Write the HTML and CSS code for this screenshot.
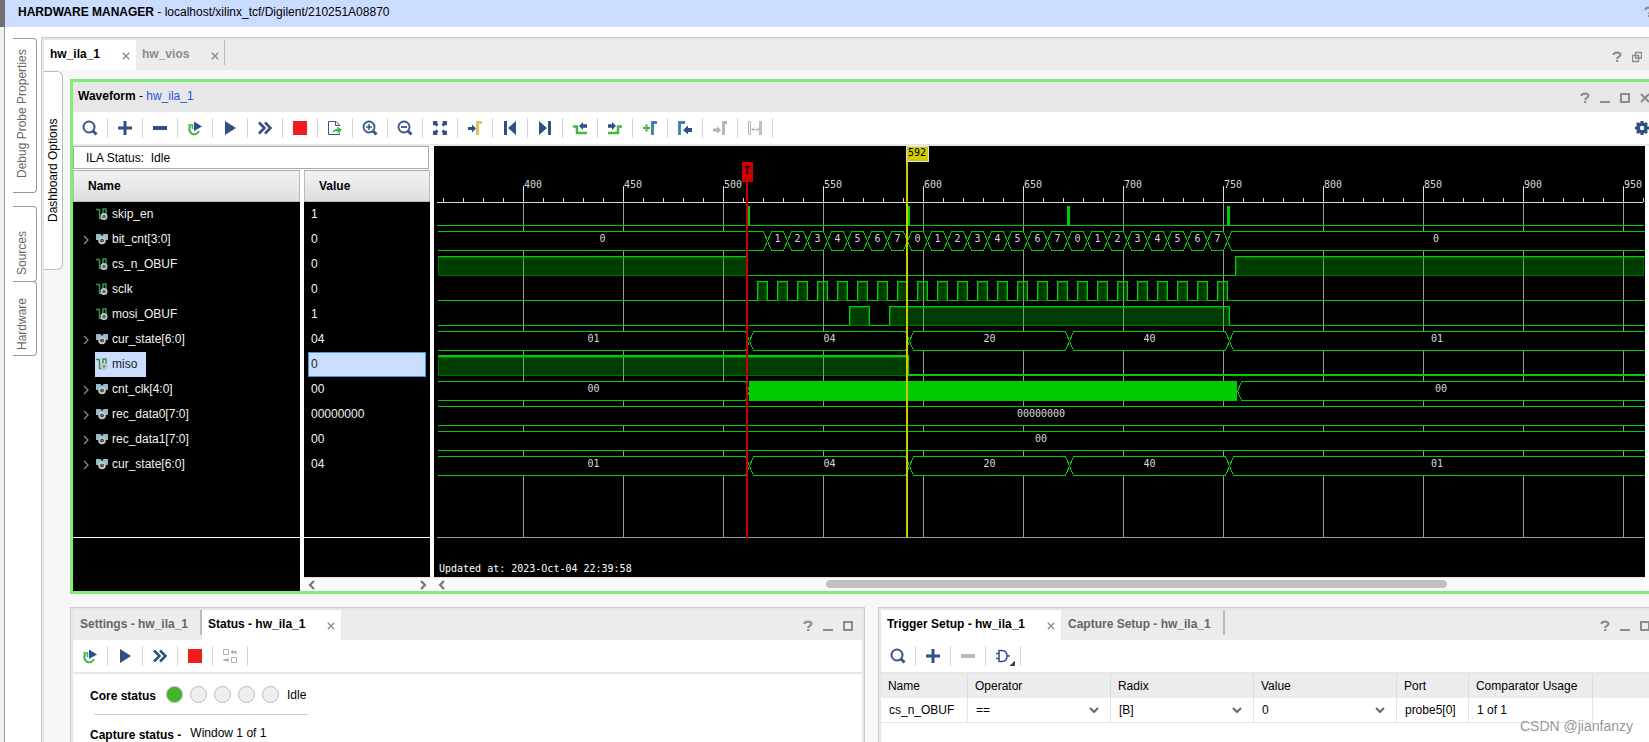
FILE: index.html
```html
<!DOCTYPE html>
<html lang="en">
<head>
<meta charset="utf-8">
<title>Hardware Manager</title>
<link rel="stylesheet" href="styles.css">
</head>
<body>
<svg class="sprite" aria-hidden="true">
  <symbol id="i-search" viewBox="0 0 16 16"><circle cx="7" cy="7" r="5.500" fill="none" stroke="#3a5588" stroke-width="2"/><path d="M11 11l3.500 3.500" stroke="#3a5588" stroke-width="3"/></symbol>
  <symbol id="i-plus" viewBox="0 0 16 16"><path d="M1 8h14M8 1v14" stroke="#2f4f86" stroke-width="3"/></symbol>
  <symbol id="i-minus" viewBox="0 0 16 16"><path d="M1 8h14" stroke="currentColor" stroke-width="4"/></symbol>
  <symbol id="i-rerun" viewBox="0 0 16 16"><path d="M3.500 6A5 5 0 1 0 12 11" fill="none" stroke="#3fb548" stroke-width="2"/><path d="M1 5h4.500v4" fill="none" stroke="#3fb548" stroke-width="1.500"/><path d="M7 1.500L15 6.500 7 11z" fill="#2f4f86"/></symbol>
  <symbol id="i-play" viewBox="0 0 16 16"><path d="M3 1l11 7-11 7z" fill="#2f4f86"/></symbol>
  <symbol id="i-ff" viewBox="0 0 16 16"><path d="M2 2.500L7.500 8 2 13.500M8 2.500L13.500 8 8 13.500" fill="none" stroke="#2f4f86" stroke-width="2.500"/></symbol>
  <symbol id="i-stop" viewBox="0 0 16 16"><path d="M1 1h14v14H1z" fill="#ee1c1c"/></symbol>
  <symbol id="i-export" viewBox="0 0 16 16"><path d="M12.500 6V5l-3.500-3.500H1.500v13h11V13M8.500 1.500v4h4" fill="none" stroke="#3a5588"/><path d="M5.500 13c.5-3 2-4 5-4V6.500L15 10l-4.500 3.500V11c-2 0-3.500.5-5 2z" fill="#3fb548"/></symbol>
  <symbol id="i-zoomin" viewBox="0 0 16 16"><circle cx="7" cy="7" r="5.500" fill="none" stroke="#3a5588" stroke-width="1.800"/><path d="M11 11l3.500 3.500" stroke="#3a5588" stroke-width="3"/><path d="M4 7h6M7 4v6" stroke="#3a5588" stroke-width="1.500"/></symbol>
  <symbol id="i-zoomout" viewBox="0 0 16 16"><circle cx="7" cy="7" r="5.500" fill="none" stroke="#3a5588" stroke-width="1.800"/><path d="M11 11l3.500 3.500" stroke="#3a5588" stroke-width="3"/><path d="M4 7h6" stroke="#3a5588" stroke-width="1.800"/></symbol>
  <symbol id="i-fit" viewBox="0 0 16 16"><path d="M1 1h5L4.800 2.200 6.500 4.500 4.500 6.500 2.200 4.800 1 6zM15 1v5l-1.200-1.200L11.500 6.500 9.500 4.500l1.700-2.300L10 1zM1 15v-5l1.200 1.200L4.500 9.500l2 2-1.700 2.300L6 15zM15 15h-5l1.200-1.200L9.500 11.500l2-2 2.300 1.700L15 10z" fill="#2f4f86"/></symbol>
  <symbol id="i-gotocursor" viewBox="0 0 16 16"><path d="M1 7h4V4.500L9 8.500l-4 4V10H1z" fill="#2f4f86"/><path d="M10.500 15V2.500H15" fill="none" stroke="#e0c565" stroke-width="3"/></symbol>
  <symbol id="i-first" viewBox="0 0 16 16"><path d="M2 1h3v14H2zM14 1v14L6 8z" fill="#2f4f86"/></symbol>
  <symbol id="i-last" viewBox="0 0 16 16"><path d="M11 1h3v14h-3zM2 1v14l8-7z" fill="#2f4f86"/></symbol>
  <symbol id="i-prevedge" viewBox="0 0 16 16"><path d="M1 6.500h4v6.500h10" fill="none" stroke="#45b83d" stroke-width="2.500"/><path d="M15 4.200v3.600h-4V10L7 6l4-4v2.200z" fill="#2f4f86"/></symbol>
  <symbol id="i-nextedge" viewBox="0 0 16 16"><path d="M15 6.500h-4v6.500H1" fill="none" stroke="#45b83d" stroke-width="2.500"/><path d="M1 4.200v3.600h4V10l4-4-4-4v2.200z" fill="#2f4f86"/></symbol>
  <symbol id="i-addmarker" viewBox="0 0 16 16"><path d="M1 8h7M4.500 4.500v7" stroke="#45b83d" stroke-width="2.200"/><path d="M10.500 15V2.500H15" fill="none" stroke="#3b80b0" stroke-width="2.800"/></symbol>
  <symbol id="i-prevmarker" viewBox="0 0 16 16"><path d="M2.500 15V2.500H8" fill="none" stroke="#3b80b0" stroke-width="2.800"/><path d="M15 8v4h-4v2.500L6 10l5-4.500V8z" fill="#2f4f86"/></symbol>
  <symbol id="i-nextmarker" viewBox="0 0 16 16"><path d="M1 8.500h4V6l4 4-4 4v-2.500H1z" fill="#b4b4b4"/><path d="M11.500 15V2.500H15" fill="none" stroke="#b4b4b4" stroke-width="2.800"/></symbol>
  <symbol id="i-swap" viewBox="0 0 16 16"><path d="M1.500 1.500h2v13h-2zM5 9.500h7M7 7.500l-2 2 2 2M10 7.500l2 2-2 2" fill="none" stroke="#b4b4b4"/><path d="M12 1h3v14h-3z" fill="#c0c0c0"/></symbol>
  <symbol id="i-gear" viewBox="0 0 16 16"><circle cx="8" cy="8" r="4" fill="none" stroke="#2f4f86" stroke-width="3.600"/><path d="M8 1v2M8 13v2M1 8h2M13 8h2M3 3l1.500 1.500M11.500 11.500L13 13M13 3l-1.500 1.500M4.500 11.500L3 13" stroke="#2f4f86" stroke-width="3"/></symbol>
  <symbol id="i-dash" viewBox="0 0 16 16"><path d="M1.500 1.500h5v5h-5zM9.500 9.500h5v5h-5z" fill="none" stroke="#b0b0b0"/><path d="M8.500 4L11 1.500V3h3.500v3h-1.500V5h-2v1.500zM7.500 12L5 9.500V11H1.500v2H5v1.500z" fill="#b0b0b0"/></symbol>
  <symbol id="i-gate" viewBox="0 0 16 16"><path d="M4 2.500h3c3.500 0 5 2.500 5 5.500s-1.500 5.500-5 5.500H4zM1 5.500h3M1 10.500h3M12 8h3" fill="none" stroke="#2f4f86" stroke-width="1.500"/></symbol>
  <symbol id="i-close" viewBox="0 0 10 10"><path d="M1 1l8 8M9 1L1 9" stroke="currentColor" stroke-width="1.600"/></symbol>
  <symbol id="i-help" viewBox="0 0 10 12"><path d="M1.500 4C1.500 .8 8.500 .8 8.500 3.800 8.500 5.800 5.200 5.500 5.200 8M5.200 9v2" fill="none" stroke="#8c8c8c" stroke-width="2.200"/></symbol>
  <symbol id="i-min" viewBox="0 0 10 12"><path d="M0 9h10v2H0z" fill="#8c8c8c"/></symbol>
  <symbol id="i-max" viewBox="0 0 10 12"><path d="M1 2h8v8H1z" fill="none" stroke="#8c8c8c" stroke-width="2"/></symbol>
  <symbol id="i-x" viewBox="0 0 10 12"><path d="M1 2l8 8M9 2l-8 8" stroke="#8c8c8c" stroke-width="2"/></symbol>
  <symbol id="i-restore" viewBox="0 0 10 12"><path d="M3.500 1.500h6v5.500h-6zM.5 4.500h6v6h-6z" fill="none" stroke="#8c8c8c" stroke-width="1.300"/></symbol>
  <symbol id="i-left" viewBox="0 0 8 10"><path d="M6 1L2 5l4 4" fill="none" stroke="#777" stroke-width="2.200"/></symbol>
  <symbol id="i-right" viewBox="0 0 8 10"><path d="M2 1l4 4-4 4" fill="none" stroke="#777" stroke-width="2.200"/></symbol>
  <symbol id="i-down" viewBox="0 0 10 6"><path d="M1 1l4 4 4-4" fill="none" stroke="#666" stroke-width="2"/></symbol>
  <symbol id="i-expand" viewBox="0 0 6 10"><path d="M1 1l4 4-4 4" fill="none" stroke="#8a8a8a" stroke-width="1.300"/></symbol>
  <symbol id="i-wire" viewBox="0 0 12 12"><path d="M0 1.500h3.500v9H6M7 6V1h3v5" fill="none" stroke="#35964a" stroke-width="1.500"/><circle cx="8" cy="8.500" r="2.500" fill="none" stroke="#c4c4c4" stroke-width="2"/><circle cx="8" cy="8.500" r="1.200" fill="#777"/></symbol>
  <symbol id="i-bus" viewBox="0 0 12 12"><path d="M0 1h4.500L6 3l1.500-2H12v6H9.500L6 5 2.500 7H0z" fill="#93b9cf"/><circle cx="6" cy="7.500" r="2.800" fill="none" stroke="#c8c8c8" stroke-width="2"/><circle cx="6" cy="7.500" r="1.300" fill="#777"/></symbol>
</svg>

<header class="titlebar">
  <h1><strong>HARDWARE MANAGER</strong> - localhost/xilinx_tcf/Digilent/210251A08870</h1>
  <button class="wbtn" aria-label="Help"><svg><use href="#i-help"/></svg></button>
</header>

<main class="app">
  <nav class="rail" aria-label="Side panels">
    <button class="vtab vtab-probe">Debug Probe Properties</button>
    <button class="vtab vtab-sources">Sources</button>
    <button class="vtab vtab-hardware">Hardware</button>
  </nav>

  <section class="workspace">
    <div class="tabstrip">
      <div class="tab active"><button class="tablabel">hw_ila_1</button><button class="tabclose" aria-label="Close hw_ila_1"><svg><use href="#i-close"/></svg></button></div>
      <div class="tab muted"><button class="tablabel">hw_vios</button><button class="tabclose" aria-label="Close hw_vios"><svg><use href="#i-close"/></svg></button></div>
      <div class="wbtns">
        <button class="wbtn" aria-label="Help"><svg><use href="#i-help"/></svg></button>
        <button class="wbtn" aria-label="Restore"><svg><use href="#i-restore"/></svg></button>
      </div>
    </div>

    <div class="dashboard">
      <button class="optionstab">Dashboard Options</button>
      <div class="panes">
        <section class="waveform">
          <header class="panehead">
            <h2><strong>Waveform</strong> - <a href="#hw_ila_1">hw_ila_1</a></h2>
            <div class="wbtns">
              <button class="wbtn" aria-label="Help"><svg><use href="#i-help"/></svg></button>
              <button class="wbtn" aria-label="Minimize"><svg><use href="#i-min"/></svg></button>
              <button class="wbtn" aria-label="Maximize"><svg><use href="#i-max"/></svg></button>
              <button class="wbtn" aria-label="Close"><svg><use href="#i-x"/></svg></button>
            </div>
          </header>
          <div class="toolbar">
            <button aria-label="Search"><svg><use href="#i-search"/></svg></button>
            <button aria-label="Add probes"><svg><use href="#i-plus"/></svg></button>
            <button aria-label="Remove probes"><svg><use href="#i-minus"/></svg></button>
            <button aria-label="Auto re-trigger"><svg><use href="#i-rerun"/></svg></button>
            <button aria-label="Run trigger"><svg><use href="#i-play"/></svg></button>
            <button aria-label="Run trigger immediate"><svg><use href="#i-ff"/></svg></button>
            <button aria-label="Stop trigger"><svg><use href="#i-stop"/></svg></button>
            <button aria-label="Export data"><svg><use href="#i-export"/></svg></button>
            <button aria-label="Zoom in"><svg><use href="#i-zoomin"/></svg></button>
            <button aria-label="Zoom out"><svg><use href="#i-zoomout"/></svg></button>
            <button aria-label="Zoom fit"><svg><use href="#i-fit"/></svg></button>
            <button aria-label="Go to cursor"><svg><use href="#i-gotocursor"/></svg></button>
            <button aria-label="Go to start"><svg><use href="#i-first"/></svg></button>
            <button aria-label="Go to end"><svg><use href="#i-last"/></svg></button>
            <button aria-label="Previous transition"><svg><use href="#i-prevedge"/></svg></button>
            <button aria-label="Next transition"><svg><use href="#i-nextedge"/></svg></button>
            <button aria-label="Add marker"><svg><use href="#i-addmarker"/></svg></button>
            <button aria-label="Previous marker"><svg><use href="#i-prevmarker"/></svg></button>
            <button aria-label="Next marker"><svg><use href="#i-nextmarker"/></svg></button>
            <button aria-label="Swap cursors"><svg><use href="#i-swap"/></svg></button>
            <button class="settings" aria-label="Settings"><svg><use href="#i-gear"/></svg></button>
          </div>
          <div class="viewer">
            <div class="signals">
              <p class="ilastatus">ILA Status:&nbsp; Idle</p>
              <table class="sigtable">
                <thead><tr><th class="cname">Name</th><td class="cgap"></td><th class="cvalue">Value</th></tr></thead>
                <tbody id="signals"></tbody>
              </table>
              <div class="sigrest">
                <div class="restname"><div class="restline"></div></div>
                <div class="restvalue">
                  <div class="restline"></div>
                  <div class="hscroll"><button aria-label="Scroll left"><svg><use href="#i-left"/></svg></button><button aria-label="Scroll right"><svg><use href="#i-right"/></svg></button></div>
                </div>
              </div>
            </div>
            <div class="wavearea">
              <svg id="wave" class="wave" role="img" aria-label="Captured waveform"></svg>
              <div class="hscroll wide">
                <button aria-label="Scroll left"><svg><use href="#i-left"/></svg></button>
                <div class="track"><div class="thumb"></div></div>
              </div>
            </div>
          </div>
        </section>

        <div class="lower">
          <section class="pane statuspane">
            <div class="tabstrip">
              <div class="tab dim"><button class="tablabel">Settings - hw_ila_1</button></div>
              <div class="tab active"><button class="tablabel">Status - hw_ila_1</button><button class="tabclose" aria-label="Close Status"><svg><use href="#i-close"/></svg></button></div>
              <div class="wbtns">
                <button class="wbtn" aria-label="Help"><svg><use href="#i-help"/></svg></button>
                <button class="wbtn" aria-label="Minimize"><svg><use href="#i-min"/></svg></button>
                <button class="wbtn" aria-label="Maximize"><svg><use href="#i-max"/></svg></button>
              </div>
            </div>
            <div class="toolbar">
              <button aria-label="Auto re-trigger"><svg><use href="#i-rerun"/></svg></button>
              <button aria-label="Run trigger"><svg><use href="#i-play"/></svg></button>
              <button aria-label="Run trigger immediate"><svg><use href="#i-ff"/></svg></button>
              <button aria-label="Stop trigger"><svg><use href="#i-stop"/></svg></button>
              <button aria-label="Dashboard link"><svg><use href="#i-dash"/></svg></button>
            </div>
            <div class="statusbody">
              <div class="corestatus">
                <strong>Core status</strong>
                <span class="leds"><i class="led on"></i><i class="led"></i><i class="led"></i><i class="led"></i><i class="led"></i></span>
                <span>Idle</span>
              </div>
              <div class="capstatus"><strong>Capture status - </strong><span>Window 1 of 1</span></div>
            </div>
          </section>

          <section class="pane triggerpane">
            <div class="tabstrip">
              <div class="tab active"><button class="tablabel">Trigger Setup - hw_ila_1</button><button class="tabclose" aria-label="Close Trigger Setup"><svg><use href="#i-close"/></svg></button></div>
              <div class="tab dim"><button class="tablabel">Capture Setup - hw_ila_1</button></div>
              <div class="wbtns">
                <button class="wbtn" aria-label="Help"><svg><use href="#i-help"/></svg></button>
                <button class="wbtn" aria-label="Minimize"><svg><use href="#i-min"/></svg></button>
                <button class="wbtn" aria-label="Maximize"><svg><use href="#i-max"/></svg></button>
              </div>
            </div>
            <div class="toolbar">
              <button aria-label="Search"><svg><use href="#i-search"/></svg></button>
              <button aria-label="Add probe"><svg><use href="#i-plus"/></svg></button>
              <button class="off" aria-label="Remove probe"><svg><use href="#i-minus"/></svg></button>
              <button class="hasmenu" aria-label="Trigger condition"><svg><use href="#i-gate"/></svg></button>
            </div>
            <div class="probearea">
              <table class="probes">
                <colgroup><col class="w-name"><col class="w-pick"><col class="w-pick"><col class="w-pick"><col class="w-port"><col class="w-usage"><col></colgroup>
                <thead><tr><th>Name</th><th id="h-op">Operator</th><th id="h-radix">Radix</th><th id="h-val">Value</th><th>Port</th><th>Comparator Usage</th><th></th></tr></thead>
                <tbody><tr>
                  <td>cs_n_OBUF</td>
                  <td><span class="pick"><select aria-labelledby="h-op"><option>==</option></select><svg><use href="#i-down"/></svg></span></td>
                  <td><span class="pick"><select aria-labelledby="h-radix"><option>[B]</option></select><svg><use href="#i-down"/></svg></span></td>
                  <td><span class="pick"><select aria-labelledby="h-val"><option>0</option></select><svg><use href="#i-down"/></svg></span></td>
                  <td>probe5[0]</td>
                  <td>1 of 1</td>
                  <td></td>
                </tr></tbody>
              </table>
            </div>
          </section>
        </div>
      </div>
    </div>
  </section>
</main>
<div class="watermark">CSDN @jianfanzy</div>
<script src="wave.js"></script>
</body>
</html>
```

FILE: styles.css
```css
* { box-sizing: border-box; }

body {
  margin: 0;
  height: 100vh;
  display: flex;
  flex-direction: column;
  overflow: hidden;
  position: relative;
  background: #fff;
  color: #000;
  font: 12px/16px "Liberation Sans", Arial, sans-serif;
}

h1, h2, p { margin: 0; font-size: 12px; font-weight: normal; }
button { font: inherit; color: inherit; background: none; border: 0; padding: 0; margin: 0; }
.sprite { display: none; }

.titlebar {
  flex: none;
  display: flex;
  justify-content: space-between;
  align-items: center;
  height: 27px;
  padding: 0 0 3px 13px;
  margin-right: -10px;
  border-left: 5px solid #707070;
  background: #cbddff;
}

.app { flex: 1; display: flex; min-height: 0; }

.rail {
  flex: none;
  width: 41px;
  padding: 11px 4px 0 9px;
  border-left: 4px solid #f0f0f0;
  box-shadow: inset 1px 0 #999;
  display: flex;
  flex-direction: column;
}
.vtab {
  writing-mode: vertical-rl;
  transform: rotate(180deg);
  border: 1px solid #999;
  border-right: 0;
  border-radius: 4px 0 0 4px;
  width: 24px;
  padding-left: 5px;
  color: #666;
}
.vtab-probe { height: 155px; margin-bottom: 13px; padding-top: 8px; padding-bottom: 4px; }
.vtab-sources { height: 76px; padding-bottom: 18px; }
.vtab-hardware { height: 75px; margin-top: -1px; padding-bottom: 10px; }

.workspace {
  flex: 1;
  min-width: 0;
  display: flex;
  flex-direction: column;
  overflow: hidden;
  margin-top: 10px;
  border-left: 1px solid #ccc;
  border-top: 1px solid #ccc;
  box-shadow: inset 2px 2px #e6e6e6;
  padding: 2px 0 0 2px;
  background: #f7f7f7;
}

.tabstrip { flex: none; display: flex; height: 30px; background: #ececec; font-weight: bold; }
.tab { display: flex; align-items: center; padding: 0 6px; }
.tablabel { padding-bottom: 3px; }
.tabclose { margin: 2px 0 0 22px; width: 8px; height: 8px; color: #888; }
.tabclose svg { display: block; width: 8px; height: 8px; }
.tab.active { background: #fff; }
.tab.muted, .tab.dim {
  background: linear-gradient(#bbb, #bbb) right top / 2px 25px no-repeat;
}
.tab.muted { color: #8c8c8c; background-size: 1px 25px; }
.tab.dim { color: #666; padding: 0 14px 0 7px; }

.wbtns { margin-left: auto; display: flex; align-items: center; padding-right: 4px; }
.wbtn { flex: none; width: 20px; height: 20px; display: grid; place-items: center; }
.wbtn svg { width: 10px; height: 12px; }
.workspace > .tabstrip .wbtns { padding-right: 2px; padding-top: 4px; }

.dashboard { flex: 1; min-height: 0; display: flex; align-items: flex-start; gap: 7px; margin-right: -13px; }
.optionstab {
  flex: none;
  writing-mode: vertical-rl;
  transform: rotate(180deg);
  width: 19px;
  height: 199px;
  margin-top: 1px;
  background: #fff;
  border: 1px solid #bbb;
  border-right: 0;
  border-radius: 6px 0 0 6px;
}
.panes { flex: 1; min-width: 0; align-self: stretch; padding-top: 9px; display: flex; flex-direction: column; gap: 13px; }

.waveform { flex: none; border: 3px solid #80ed78; background: #fff; }
.panehead { display: flex; align-items: center; height: 30px; padding-left: 5px; background: #e7e7e7; }
.panehead h2 { padding-bottom: 2px; }
.panehead a { color: #1a56e8; text-decoration: none; }
.panehead .wbtns, .pane .wbtns { padding-top: 2px; }

.toolbar { flex: none; display: flex; align-items: center; height: 34px; border-bottom: 2px solid #e7e7e7; background: #fff; }
.toolbar button { width: 35px; height: 20px; border-right: 1px solid #d5d5d5; display: grid; place-items: center; color: #2f4f86; }
.toolbar svg { width: 16px; height: 16px; }
.toolbar .settings { margin-left: auto; border: 0; }
.toolbar .off { color: #b8b8b8; }
.toolbar .hasmenu { background: linear-gradient(135deg, transparent 50%, #444 50%) 24px 15px / 5px 5px no-repeat; }

.viewer { display: flex; }
.signals { flex: none; width: 361px; display: flex; flex-direction: column; }
.ilastatus { width: 356px; height: 23px; padding: 3px 12px; border: 1px solid #aaa; margin-bottom: 1px; }
.sigtable { width: 357px; table-layout: fixed; border-collapse: separate; border-spacing: 0; }
.sigtable th {
  height: 32px;
  padding: 0 14px;
  text-align: left;
  background: linear-gradient(#f3f3f5, #dedee0);
  border: 1px solid #bbb;
  border-top-color: #aaa;
}
.cname { width: 227px; }
.cgap { width: 4px; padding: 0; background: #fff; }
.sigtable tbody td { height: 25px; padding: 0; background: #000; color: #f2f2f2; }
.sigtable tbody td.cgap { background: #fff; }
.signame { display: flex; align-items: center; height: 25px; padding-left: 10px; }
.expander { width: 6px; height: 10px; margin-right: 6px; }
.expander svg { display: block; width: 6px; height: 10px; }
.siglabel { display: flex; align-items: center; gap: 4px; height: 25px; padding: 0 9px 1px 1px; }
.siglabel svg { width: 12px; height: 12px; }
.sigvalue { margin: 0 4px; height: 25px; line-height: 22px; border: 1px solid transparent; padding-left: 2px; }
.picked .siglabel { background: #cbddff; color: #222; }
.picked .sigvalue { background: #cbddff; border-color: #3f97d6; color: #222; }
.sigrest { flex: 1; display: grid; grid-template-columns: 227px 126px; column-gap: 4px; }
.restname, .restvalue { background: #000; display: flex; flex-direction: column; }
.restline { height: 61px; border-bottom: 1px solid #fff; }
.hscroll { height: 14px; display: flex; align-items: center; justify-content: space-between; padding: 0 3px 0 4px; background: #fbfbfb; border-top: 1px solid #e2e2e2; }
.hscroll button, .hscroll button svg { display: block; width: 8px; height: 10px; }
.restvalue .hscroll { margin-top: auto; }
.wavearea { flex: 1; min-width: 0; margin-right: 14px; display: flex; flex-direction: column; }
.wave { display: block; width: 100%; height: 431px; background: #000; font: 10px "DejaVu Sans Mono", monospace; }
.hscroll.wide { padding-right: 6px; }
.track { flex: 1; padding: 0 16% 1px 0; display: flex; justify-content: flex-end; }
.thumb { height: 8px; width: 62%; border-radius: 4px; background: #c1c1c1; }

.grid { fill: #999; }
.axis { fill: #ddd; }
.lab { fill: #d8d8d8; }
.stamp { fill: #fff; }
.mid { text-anchor: middle; }
.area { fill: #00cc00; fill-opacity: .3; }
.inner { fill: none; stroke: #00cc00; stroke-opacity: .35; }
.trace { fill: none; stroke: #00cc00; }
.thick { stroke-width: 2; }
.solid { fill: #00cc00; }
.trigger { fill: #cc0000; }
.cursor { fill: #cccc00; }
.flag { fill: #cccc00; stroke: #ddd; }
.dark { fill: #000; }
.heavy { font-weight: bold; }

.lower { flex: 1; min-height: 0; display: flex; gap: 13px; }
.pane { min-width: 0; border: 1px solid #ccc; border-bottom: 0; box-shadow: inset 2px 2px #e6e6e6, inset -2px 0 #e6e6e6; padding: 2px 2px 0; display: flex; flex-direction: column; }
.pane .tab.active { padding-left: 6px; }
.statuspane { flex: 795 1 0; }
.triggerpane { flex: 784 1 0; }
.statusbody { flex: 1; background: #fff; padding: 9px 17px; }
.corestatus { display: flex; align-items: center; gap: 8px; height: 31px; padding-bottom: 8px; }
.corestatus strong { padding: 3px 2px 0 0; }
.leds { display: flex; gap: 7px; }
.led { width: 17px; height: 17px; border-radius: 50%; border: 1px solid #bbb; background: #eee; }
.led.on { background: #42b52a; }
.capstatus { display: flex; gap: 9px; width: 214px; margin-left: 4px; border-top: 1px solid #ccc; padding-top: 10px; white-space: nowrap; }
.capstatus strong { margin: 2px 0 0 -4px; }

.probearea { flex: 1; background: #fff; }
.probes { width: 100%; table-layout: fixed; border-collapse: separate; border-spacing: 0; }
.probes th { height: 24px; padding: 0 7px; text-align: left; font-weight: normal; background: #ececec; border-right: 1px solid #dcdcdc; }
.probes td { height: 25px; padding: 0 8px; border-right: 1px solid #e4e4e4; border-bottom: 1px solid #e4e4e4; }
.w-name { width: 87px; }
.w-pick { width: 143px; }
.w-port { width: 72px; }
.w-usage { width: 124px; }
.probes td:last-child { border: 0; }
.pick { display: grid; align-items: center; }
.pick > * { grid-area: 1 / 1; }
.pick select { appearance: none; border: 0; background: none; font: inherit; color: inherit; padding: 0; margin: 0; width: 100%; }
.pick svg { width: 10px; height: 6px; justify-self: end; margin-right: 3px; pointer-events: none; }

.watermark { position: absolute; right: 16px; bottom: 6px; font-size: 14px; line-height: 20px; color: #999; }
```

FILE: wave.js
```js
const SIGNALS = [
  { name: "skip_en", value: "1", kind: "pulse", at: [512, 592, 672, 752] },
  { name: "bit_cnt[3:0]", value: "0", kind: "bus", edges: [], labels: [] },
  { name: "cs_n_OBUF", value: "0", kind: "bit", start: 1, edges: [512, 756] },
  { name: "sclk", value: "0", kind: "bit", start: 0, edges: [] },
  { name: "mosi_OBUF", value: "1", kind: "bit", start: 0, edges: [563, 573, 583, 753] },
  { name: "cur_state[6:0]", value: "04", kind: "bus", edges: [513, 593, 673, 753], labels: ["01", "04", "20", "40", "01"] },
  { name: "miso", value: "0", kind: "bit", start: 1, edges: [592], picked: true },
  { name: "cnt_clk[4:0]", value: "00", kind: "bus", edges: [513, 757], labels: ["00", "", "00"], busy: 1 },
  { name: "rec_data0[7:0]", value: "00000000", kind: "bus", edges: [], labels: ["00000000"] },
  { name: "rec_data1[7:0]", value: "00", kind: "bus", edges: [], labels: ["00"] },
  { name: "cur_state[6:0]", value: "04", kind: "bus", edges: [513, 593, 673, 753], labels: ["01", "04", "20", "40", "01"] }
];
for (let k = 0; k < 24; k++) {
  SIGNALS[1].edges.push(522 + k * 10);
  SIGNALS[1].labels.push(String(k % 8));
  SIGNALS[3].edges.push(517 + k * 10, 522 + k * 10);
}
SIGNALS[1].labels.push("0");

document.getElementById("signals").innerHTML = SIGNALS.map(s => {
  const bus = s.kind === "bus";
  const arrow = bus ? '<svg><use href="#i-expand"/></svg>' : "";
  const tag = bus ? "button" : "span";
  return `<tr class="${s.picked ? "picked" : ""}"><td><div class="signame">` +
    `<${tag} class="expander"${bus ? ' aria-label="Expand"' : ""}>${arrow}</${tag}>` +
    `<span class="siglabel"><svg><use href="#${bus ? "i-bus" : "i-wire"}"/></svg>${s.name}</span></div></td>` +
    `<td class="cgap"></td><td><div class="sigvalue">${s.value}</div></td></tr>`;
}).join("");

const TOP = 56, ROW = 25, HI = 4, LO = 23, LEFT = 3, FLOOR = 391;
const X = t => 89 + (t - 400) * 2;
const rect = (c, x, y, w, h) => `<rect class="${c}" x="${x}" y="${y}" width="${w}" height="${h}"/>`;
const text = (c, x, y, s) => `<text class="${c}" x="${x}" y="${y}">${s}</text>`;

function drawBus(s, y, end) {
  const xs = [LEFT, ...s.edges.map(X), end];
  const hi = y + HI + .5, lo = y + LO + .5, mid = (hi + lo) / 2;
  let out = "", busy = "";
  for (let i = 0; i < xs.length - 1; i++) {
    const a = xs[i] + .5, b = xs[i + 1] + .5;
    if (s.busy === i) {
      busy = rect("solid", xs[i], y + HI, xs[i + 1] - xs[i], LO - HI + 1);
      continue;
    }
    const l = i ? 4 : 0, r = i < xs.length - 2 ? 4 : 0;
    const top = `M${a} ${l ? mid : hi}L${a + l} ${hi}L${b - r} ${hi}L${b} ${r ? mid : hi}`;
    const bottom = `M${a} ${l ? mid : lo}L${a + l} ${lo}L${b - r} ${lo}L${b} ${r ? mid : lo}`;
    out += rect("dark", xs[i], y + HI, xs[i + 1] - xs[i], LO - HI + 1);
    out += `<path class="trace" d="${top}${bottom}"/>`;
    out += text("lab mid", (a + b) / 2, y + 15, s.labels[i]);
  }
  return out + busy;
}

function drawBit(s, y, end) {
  const xs = [LEFT, ...s.edges.map(X), end];
  const lift = s.picked ? 0 : .5;
  const hi = y + HI + lift, lo = y + LO + lift;
  let level = s.start, d = "", out = "";
  for (let i = 0; i < xs.length - 1; i++) {
    const a = xs[i], b = xs[i + 1], v = level ? hi : lo;
    d += `${i ? "L" : "M"}${a + .5} ${v}L${b + .5} ${v}`;
    if (level) {
      out += rect("area", a + 1, y + HI, b - a - 1, LO - HI + 1);
      out += rect("inner", a + 1.5, y + HI + 1.5, b - a - 2, LO - HI - 1);
    }
    level = 1 - level;
  }
  return out + `<path class="trace ${s.picked ? "thick" : ""}" d="${d}"/>`;
}

function drawPulse(s, y, end) {
  return rect("solid", LEFT, y + LO, end - LEFT, 1) +
    s.at.map(t => rect("solid", X(t), y + HI, 3, LO - HI)).join("");
}

function draw() {
  const svg = document.getElementById("wave");
  const end = svg.clientWidth - 1;
  let out = "";
  for (let t = 360; X(t) < end; t += 10) {
    if (t % 50 === 0) {
      out += rect("grid", X(t), TOP, 1, FLOOR - TOP) + rect("axis", X(t), 40, 1, 16);
      out += text("lab", X(t) + 1, 42, t);
    } else {
      out += rect("axis", X(t), 52, 1, 4);
    }
  }
  out += rect("axis", LEFT, TOP, end - LEFT - 1, 1) + rect("grid", LEFT, FLOOR, end - LEFT, 1);
  const kinds = { bus: drawBus, bit: drawBit, pulse: drawPulse };
  SIGNALS.forEach((s, i) => { out += kinds[s.kind](s, TOP + i * ROW, end); });
  out += rect("trigger", X(512) - 1, 36, 2, 356) + rect("trigger", 308, 16, 11, 20);
  out += text("dark heavy", 310, 28, "T");
  out += rect("cursor", X(592) - 1, 0, 2, 392) + `<rect class="flag" x="472.5" y="0.5" width="22" height="15"/>`;
  out += text("dark", 474, 10, "592");
  out += text("stamp", 5, 426, "Updated at: 2023-Oct-04 22:39:58");
  svg.innerHTML = `<g shape-rendering="crispEdges">${out}</g>`;
}

draw();
window.addEventListener("resize", draw);
```
